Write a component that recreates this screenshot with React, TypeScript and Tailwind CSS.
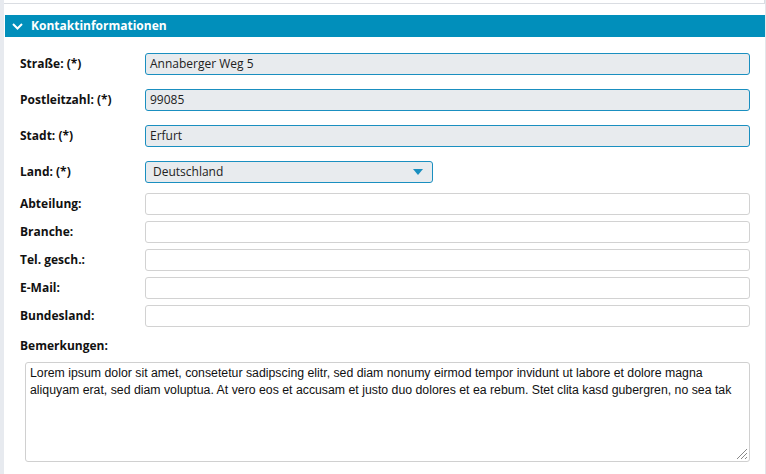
import { ReactNode } from 'react';

const labelFont = { fontFamily: '"Open Sans", "Noto Sans", sans-serif' };

function Row({ label, children, tall }: { label: string; children: ReactNode; tall?: boolean }) {
  return (
    <div className={`flex items-center ${tall ? 'h-[36px]' : 'h-[28px]'}`}>
      <div className="w-[125px] shrink-0 text-[12px] font-bold text-[#111]">{label}</div>
      {children}
    </div>
  );
}

function FilledInput({ value }: { value: string }) {
  return (
    <div className="flex h-[22px] flex-1 items-center rounded-[3px] border border-[#1a8fc0] bg-[#e8ebee] px-[4px] text-[12px] text-[#222]">
      {value}
    </div>
  );
}

function EmptyInput() {
  return <div className="h-[22px] flex-1 rounded-[3px] border border-[#d2d2d2] bg-white" />;
}

export default function App() {
  return (
    <div className="flex h-[474px] w-[766px] bg-white" style={labelFont}>
      <div className="w-[4px] shrink-0 bg-[#e7eaef]" />
      <div className="flex flex-1 flex-col border-r border-[#e3e6ea]">
        <div className="h-[4px] border-b border-r border-[#dadde2]" />
        <div className="mt-[11px] ml-[1px] flex h-[22px] items-center gap-[8px] bg-[#018fbb] pl-[7px] text-[12px] font-bold text-white">
          <svg width="11" height="7" viewBox="0 0 11 7" fill="none">
            <path d="M1 1l4.5 4.5L10 1" stroke="white" strokeWidth="2" />
          </svg>
          Kontaktinformationen
        </div>
        <div className="flex flex-col pl-[16px] pr-[15px] pt-[9px]">
          <Row label="Straße: (*)" tall>
            <FilledInput value="Annaberger Weg 5" />
          </Row>
          <Row label="Postleitzahl: (*)" tall>
            <FilledInput value="99085" />
          </Row>
          <Row label="Stadt: (*)" tall>
            <FilledInput value="Erfurt" />
          </Row>
          <Row label="Land: (*)" tall>
            <div className="flex h-[22px] w-[288px] items-center justify-between rounded-[3px] border border-[#1a8fc0] bg-[#e8ebee] pl-[7px] pr-[9px] text-[12px] text-[#222]">
              Deutschland
              <svg width="10" height="6" viewBox="0 0 10 6">
                <path d="M0 0h10L5 6z" fill="#1a8fc0" />
              </svg>
            </div>
          </Row>
          <Row label="Abteilung:">
            <EmptyInput />
          </Row>
          <Row label="Branche:">
            <EmptyInput />
          </Row>
          <Row label="Tel. gesch.:">
            <EmptyInput />
          </Row>
          <Row label="E-Mail:">
            <EmptyInput />
          </Row>
          <Row label="Bundesland:">
            <EmptyInput />
          </Row>
          <div className="mt-[7px] text-[12px] font-bold text-[#111]">Bemerkungen:</div>
          <div className="relative mt-[7px] ml-[5px] h-[100px] rounded-[3px] border border-[#d0d0d0] px-[4px] pt-[2px] text-[12.3px] leading-[17px] text-[#111]" style={{ fontFamily: '"Liberation Sans", Arial, sans-serif' }}>
            Lorem ipsum dolor sit amet, consetetur sadipscing elitr, sed diam nonumy eirmod tempor invidunt ut labore et dolore magna aliquyam erat, sed diam voluptua. At vero eos et accusam et justo duo dolores et ea rebum. Stet clita kasd gubergren, no sea tak
            <svg className="absolute bottom-[1px] right-[1px]" width="14" height="14" viewBox="0 0 14 14">
              <path d="M13 3L3 13M13 7L7 13M13 11L11 13" stroke="#888" strokeWidth="1" />
            </svg>
          </div>
        </div>
      </div>
    </div>
  );
}
